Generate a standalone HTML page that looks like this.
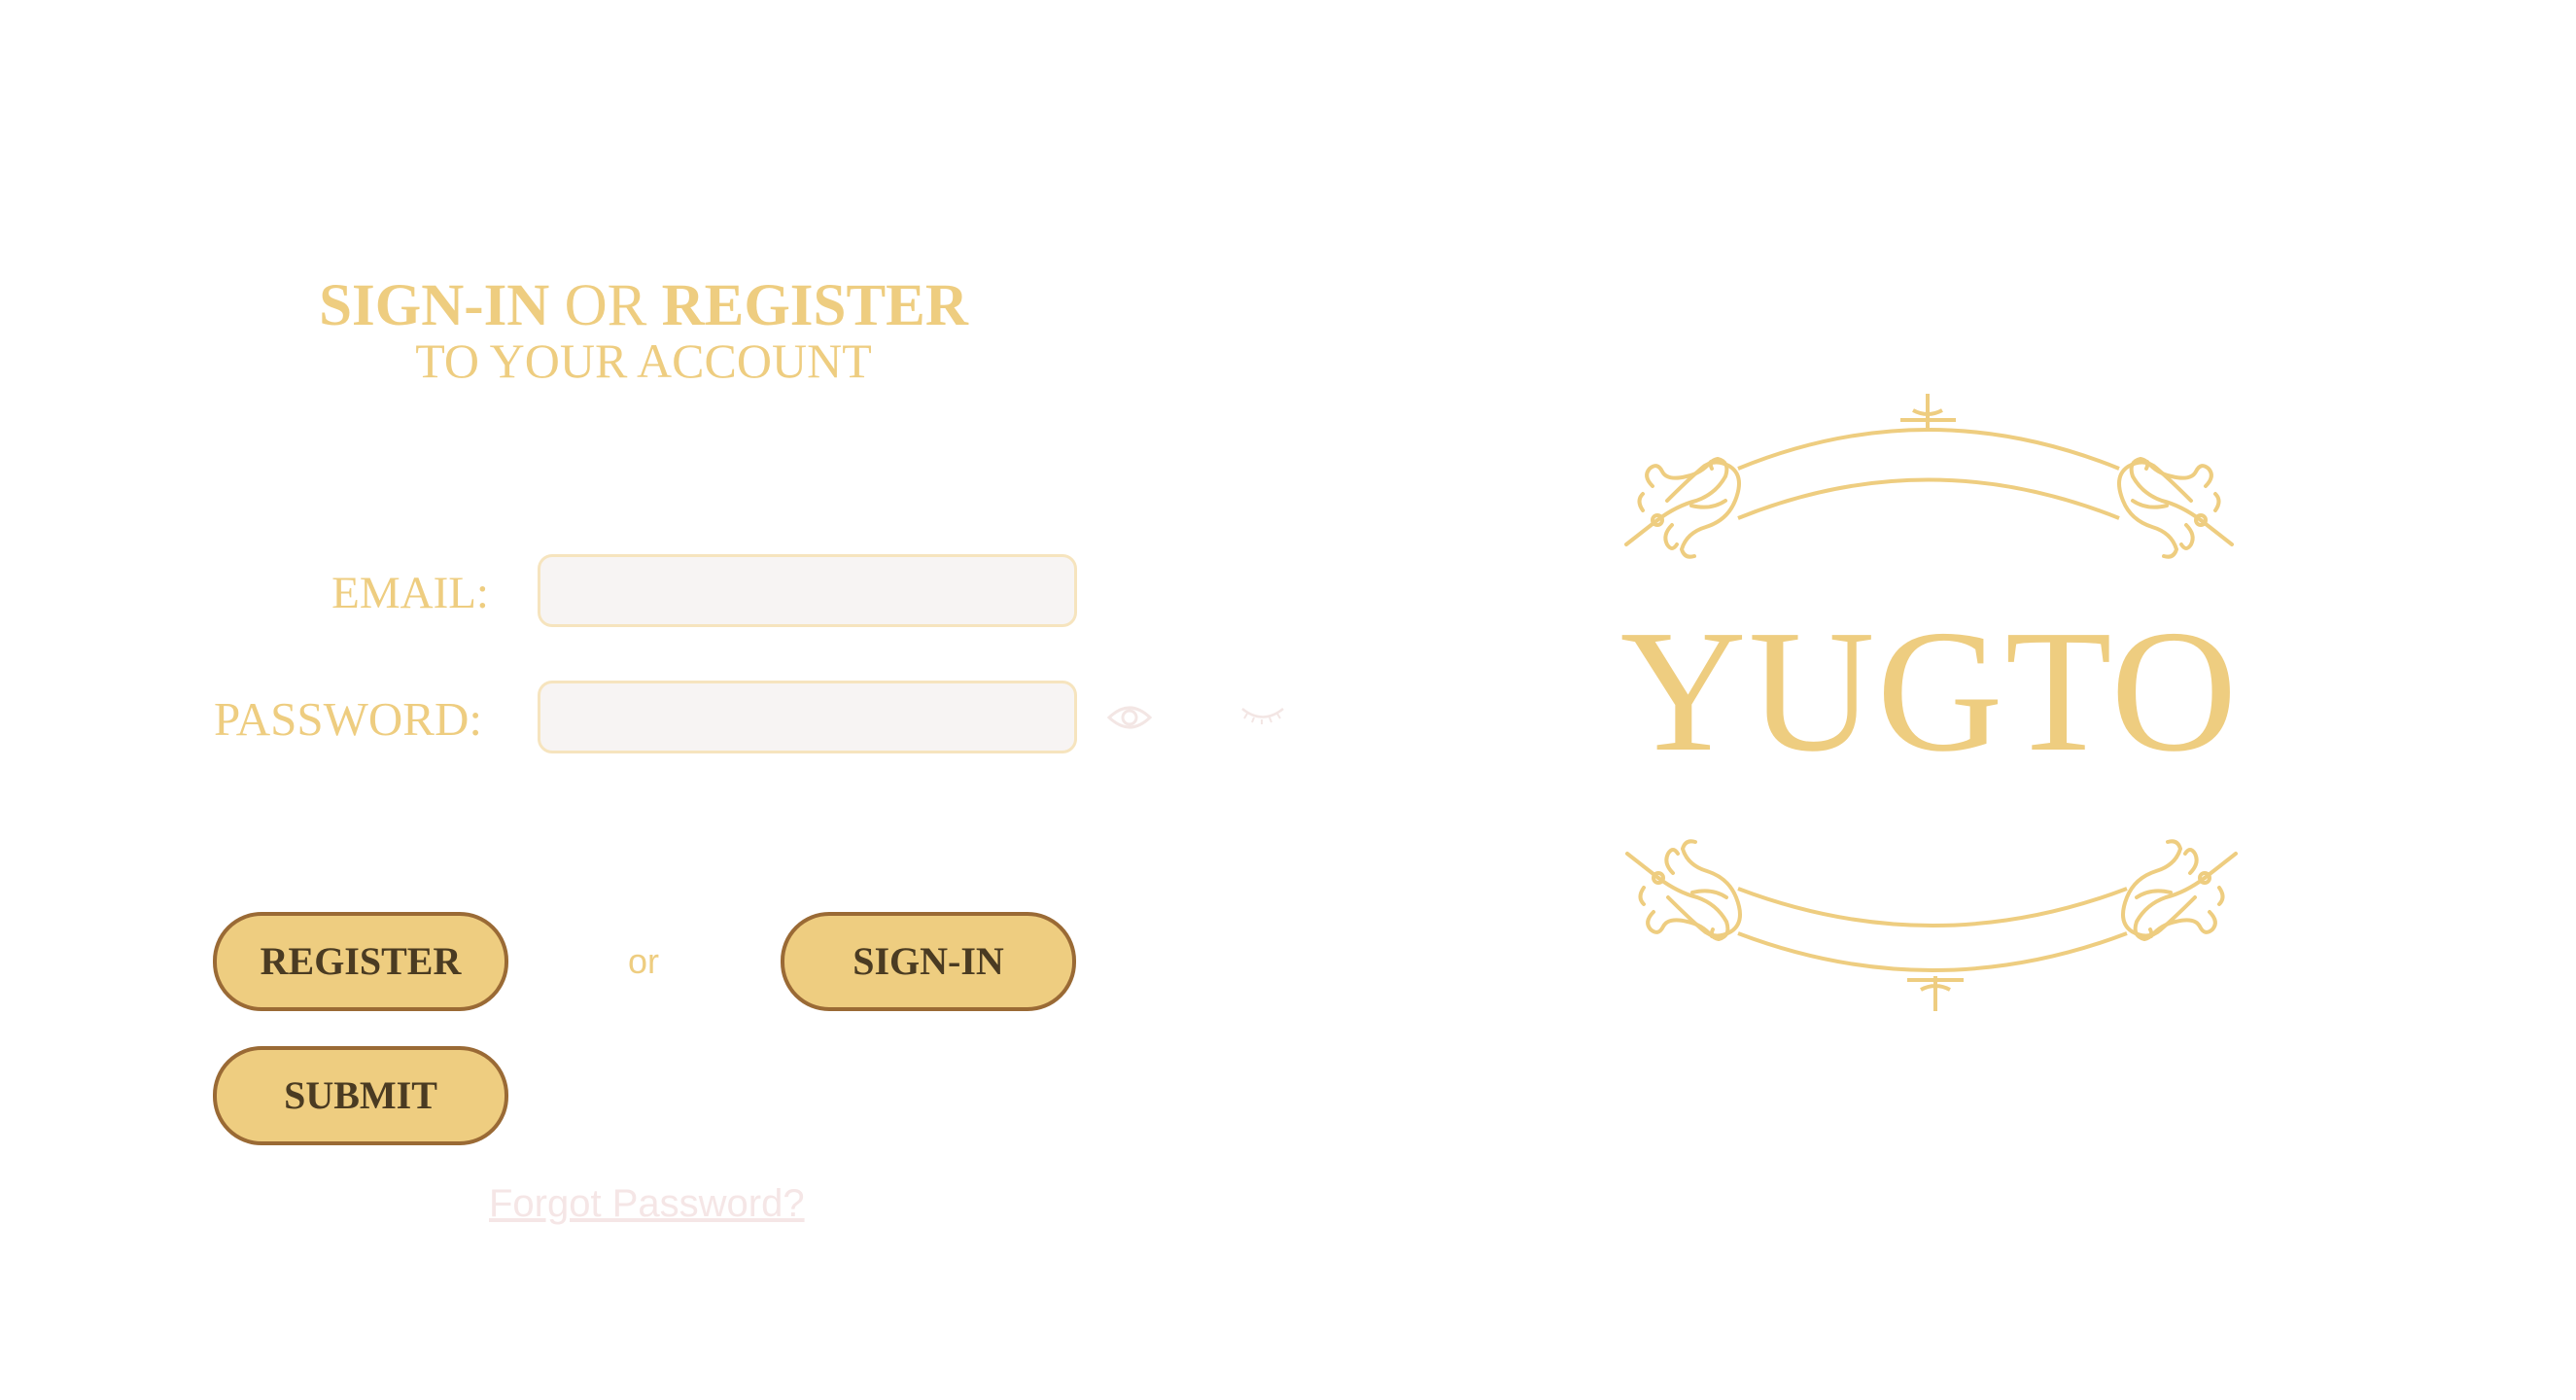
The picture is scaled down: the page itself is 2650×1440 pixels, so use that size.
<!DOCTYPE html>
<html><head><meta charset="utf-8"><style>
html,body{margin:0;padding:0;background:#fff;}
body{width:2650px;height:1440px;position:relative;overflow:hidden;font-family:"Liberation Serif",serif;}
.abs{position:absolute;}
.title{left:262px;width:800px;text-align:center;top:284px;font-size:61px;color:#eecd80;line-height:1;white-space:nowrap}
.sub{left:262px;width:800px;text-align:center;top:346px;font-size:50px;color:#eecd80;line-height:1;white-space:nowrap}
.lbl{color:#eecd80;line-height:1;text-align:right;width:400px;}
.inp{left:553px;width:549px;height:69px;background:#f7f4f3;border:3px solid #f6e4be;border-radius:15px;}
.btn{width:296px;height:94px;border:4px solid #9a6a35;background:#eecd80;border-radius:50px;color:#4a3b22;font-weight:bold;font-size:40px;text-align:center;line-height:94px;box-sizing:content-box}
</style></head><body>
<div class="abs title"><b>SIGN-IN</b> OR <b>REGISTER</b></div>
<div class="abs sub">TO YOUR ACCOUNT</div>
<div class="abs lbl" style="left:103px;top:587px;font-size:47px">EMAIL:</div>
<div class="abs lbl" style="left:96px;top:715px;font-size:49px">PASSWORD:</div>
<div class="abs inp" style="top:570px"></div>
<div class="abs inp" style="top:700px"></div>
<svg class="abs" style="left:1138px;top:724px" width="48" height="28" viewBox="0 0 48 28"><path d="M3 14 Q24 -6 45 14 Q24 34 3 14Z" fill="none" stroke="#f3e6e4" stroke-width="3"/><circle cx="24" cy="14" r="7" fill="none" stroke="#f3e6e4" stroke-width="3"/></svg>
<svg class="abs" style="left:1275px;top:726px" width="48" height="24" viewBox="0 0 48 24"><path d="M3 3 Q24 20 45 3" fill="none" stroke="#f3e6e4" stroke-width="2.5"/><path d="M8 8l-3 5M15 12l-2 5M23 14v5M31 12l2 5M39 8l3 5" stroke="#f3e6e4" stroke-width="2"/></svg>
<div class="abs btn" style="left:219px;top:938px">REGISTER</div>
<div class="abs" style="left:646px;top:968px;font-family:'Liberation Sans',sans-serif;font-size:36px;color:#eecd80">or</div>
<div class="abs btn" style="left:803px;top:938px">SIGN-IN</div>
<div class="abs btn" style="left:219px;top:1076px">SUBMIT</div>
<div class="abs" style="left:503px;top:1216px;font-family:'Liberation Sans',sans-serif;font-size:40px;color:#f5e6e6;text-decoration:underline">Forgot Password?</div>

<svg class="abs" style="left:0;top:0" width="2650" height="1440" viewBox="0 0 2650 1440">
<defs>
<g id="scroll" fill="none" stroke="#eecd80" stroke-width="4" stroke-linecap="round">
<path d="M-72 40 L-40 15"/>
<circle cx="-40" cy="15" r="5"/>
<path d="M-40 15 Q-20 0 0 -5 Q20 -12 30 -30 Q35 -45 22 -48 Q12 -46 16 -38"/>
<path d="M-30 -5 Q-10 -25 5 -38 Q18 -50 35 -40 Q50 -30 40 -5 Q32 15 10 22 Q-10 28 -15 45 Q-12 55 -2 52"/>
<path d="M-45 -20 Q-55 -30 -48 -38 Q-40 -45 -35 -35 Q-30 -25 -10 -30 Q5 -33 15 -45"/>
<path d="M-25 20 Q-35 30 -30 40 Q-25 48 -20 40"/>
<path d="M-5 0 Q15 5 30 -5"/>
<path d="M-55 5 Q-62 -5 -55 -12"/>
</g>
</defs>
<g transform="translate(-10,0)">
<g fill="none" stroke="#eecd80" stroke-width="4">
<path d="M1798 482 Q1993 402 2190 482"/>
<path d="M1798 533 Q1993 454 2190 533"/>
<path d="M1798 914 Q1998 990 2198 914"/>
<path d="M1798 960 Q1998 1036 2198 960"/>
<path d="M1993 405 V440 M1965 432 H2022 M1978 422 Q1993 430 2008 422"/>
<path d="M2001 1004 V1040 M1972 1008 H2030 M1986 1018 Q2001 1010 2016 1018"/>
</g>
<use href="#scroll" transform="translate(1755,520)"/>
<use href="#scroll" transform="translate(2234,520) scale(-1,1)"/>
<use href="#scroll" transform="translate(1756,918) scale(1,-1)"/>
<use href="#scroll" transform="translate(2238,918) scale(-1,-1)"/>
</g>
<text x="1985" y="771" text-anchor="middle" font-family="Liberation Serif,serif" font-size="180" fill="#eecd80" letter-spacing="2">YUGTO</text>
</svg>
</body></html>
